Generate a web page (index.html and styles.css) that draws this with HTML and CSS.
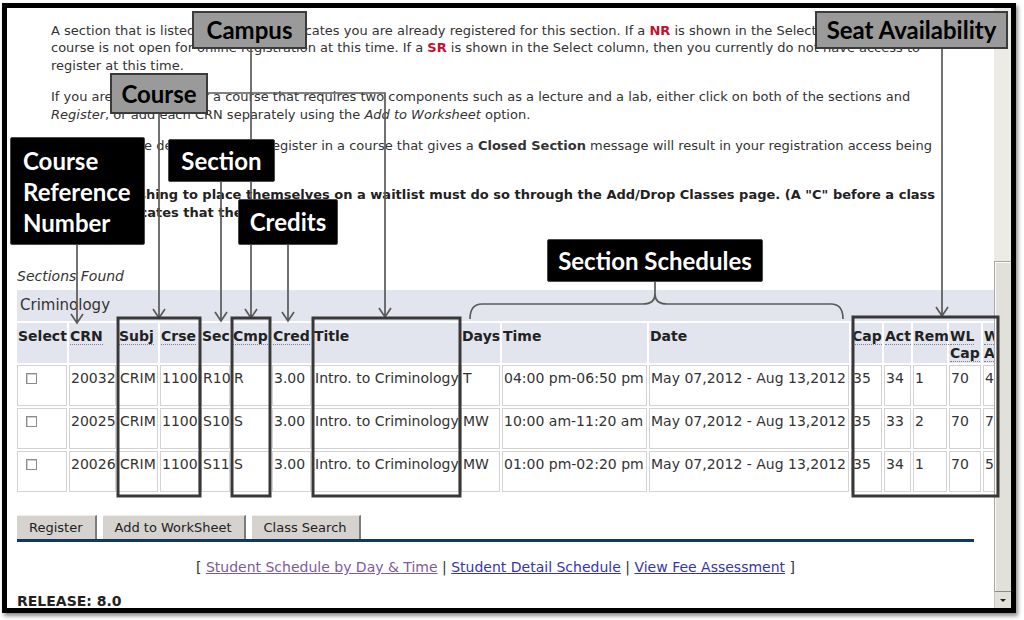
FILE: index.html
```html
<!DOCTYPE html>
<html lang="en">
<head>
<meta charset="utf-8">
<title>Look Up Classes - Sections Found</title>
<link rel="stylesheet" href="styles.css">
</head>
<body>
<div class="stage">
  <div class="shot">
    <div class="page">
      <div class="info">
        <p>A section that is listed in RE status indicates you are already registered for this section. If a <b class="flag">NR</b> is shown in the Select column, then the course is not open for online registration at this time. If a <b class="flag">SR</b> is shown in the Select column, then you currently do not have access to register at this time.</p>
        <p>If you are registering for a course that requires two components such as a lecture and a lab, either click on both of the sections and <i>Register</i>, or add each CRN separately using the <i>Add to Worksheet</i> option.</p>
        <p>Please note the deadlines; try to register in a course that gives a <b>Closed Section</b> message will result in your registration access being restricted.</p>
        <p class="strong">Students wishing to place themselves on a waitlist must do so through the Add/Drop Classes page. (A "C" before a class number indicates that these are full.)</p>
      </div>

      <div class="found">Sections Found</div>

      <table class="sections">
        <caption>Criminology</caption>
        <thead>
          <tr>
            <th class="w-sel">Select</th>
            <th class="w-crn"><span class="abbr">CRN</span></th>
            <th class="w-subj"><span class="abbr">Subj</span></th>
            <th class="w-crse"><span class="abbr">Crse</span></th>
            <th class="w-sec">Sec</th>
            <th class="w-cmp"><span class="abbr">Cmp</span></th>
            <th class="w-cred"><span class="abbr">Cred</span></th>
            <th class="w-title">Title</th>
            <th class="w-days">Days</th>
            <th class="w-time">Time</th>
            <th class="w-date">Date</th>
            <th class="w-cap"><span class="abbr">Cap</span></th>
            <th class="w-act"><span class="abbr">Act</span></th>
            <th class="w-rem"><span class="abbr">Rem</span></th>
            <th class="w-wlcap"><span class="abbr">WL</span><br><span class="abbr">Cap</span></th>
            <th class="w-wlact"><span class="abbr">WL</span><br><span class="abbr">Act</span></th>
          </tr>
        </thead>
        <tbody>
          <tr>
            <td><span class="cb"></span></td>
            <td>20032</td><td>CRIM</td><td>1100</td><td>R10</td><td>R</td><td>3.00</td>
            <td>Intro. to Criminology</td><td>T</td><td>04:00 pm-06:50 pm</td>
            <td>May 07,2012 - Aug 13,2012</td><td>35</td><td>34</td><td>1</td><td>70</td><td>4</td>
          </tr>
          <tr>
            <td><span class="cb"></span></td>
            <td>20025</td><td>CRIM</td><td>1100</td><td>S10</td><td>S</td><td>3.00</td>
            <td>Intro. to Criminology</td><td>MW</td><td>10:00 am-11:20 am</td>
            <td>May 07,2012 - Aug 13,2012</td><td>35</td><td>33</td><td>2</td><td>70</td><td>7</td>
          </tr>
          <tr>
            <td><span class="cb"></span></td>
            <td>20026</td><td>CRIM</td><td>1100</td><td>S11</td><td>S</td><td>3.00</td>
            <td>Intro. to Criminology</td><td>MW</td><td>01:00 pm-02:20 pm</td>
            <td>May 07,2012 - Aug 13,2012</td><td>35</td><td>34</td><td>1</td><td>70</td><td>5</td>
          </tr>
        </tbody>
      </table>

      <div class="actions">
        <button type="button" class="btn">Register</button>
        <button type="button" class="btn">Add to WorkSheet</button>
        <button type="button" class="btn">Class Search</button>
      </div>
      <div class="rule"></div>

      <div class="links">[ <a href="#" class="visited">Student Schedule by Day &amp; Time</a> | <a href="#">Student Detail Schedule</a> | <a href="#">View Fee Assessment</a> ]</div>

      <div class="release">RELEASE: 8.0</div>
    </div>

    <div class="scrollbar">
      <div class="sb-space"></div>
      <div class="sb-thumb"></div>
      <div class="sb-down"><span class="sb-arrow"></span></div>
    </div>
  </div>

  <div class="overlay">
    <svg class="marks" width="1024" height="620" viewBox="0 0 1024 620">
      <g class="leader">
        <path d="M77 245V323M71 314L77 323L83 314"/>
        <path d="M159 114V318M153 309L159 318L165 309"/>
        <path d="M208 93H385V317M379 308L385 317L391 308"/>
        <path d="M251 49V318M245 309L251 318L257 309"/>
        <path d="M221 182V321M215 312L221 321L227 312"/>
        <path d="M288 245V321M282 312L288 321L294 312"/>
        <path d="M942 49V316M936 307L942 316L948 307"/>
        <path d="M655 282V294M470 319Q470 304 482 304H643Q655 304 655 294Q655 304 667 304H831Q843 304 843 319"/>
      </g>
      <g class="hl">
        <rect x="118" y="318" width="82" height="178"/>
        <rect x="232" y="318" width="38" height="178"/>
        <rect x="313" y="318" width="147" height="178"/>
        <rect x="853" y="317" width="145" height="179"/>
      </g>
    </svg>

    <div class="callout gray c-campus">Campus</div>
    <div class="callout gray c-seat">Seat Availability</div>
    <div class="callout gray c-course">Course</div>
    <div class="callout dark c-crn"><span>Course</span><span>Reference</span><span>Number</span></div>
    <div class="callout dark c-section">Section</div>
    <div class="callout dark c-credits">Credits</div>
    <div class="callout dark c-sched">Section Schedules</div>
  </div>
</div>
</body>
</html>
```

FILE: styles.css
```css
* {
  box-sizing: border-box;
}

html,
body {
  margin: 0;
  padding: 0;
  background: #fff;
}

body {
  font-family: "DejaVu Sans", Verdana, sans-serif;
  color: #333;
}

.stage {
  position: relative;
  width: 1024px;
  height: 620px;
  padding: 3px 0 0 2px;
  overflow: hidden;
}

/* framed screenshot */
.shot {
  width: 1014px;
  height: 610px;
  border: 5px solid #000;
  display: flex;
  background: #fff;
  box-shadow: 2px 3px 4px rgba(0, 0, 0, 0.45);
}

.page {
  flex: 1;
  min-width: 0;
  overflow: hidden;
  padding-left: 10px;
}

/* instructions */
.info {
  width: 933px;
  padding: 13.5px 0 0 34px;
}

.info p {
  margin: 0 0 14px;
  font-size: 13px;
  line-height: 17.5px;
}

.info p:last-child {
  margin-bottom: 0;
}

.flag {
  color: #c8102e;
}

.strong {
  font-weight: bold;
  color: #222;
}

.found {
  margin: 47px 0 4.5px;
  font-size: 14px;
  line-height: 17px;
  font-style: italic;
  color: #333;
}

/* sections table */
.sections {
  border-collapse: separate;
  border-spacing: 2px;
  table-layout: fixed;
  width: 1010px;
  margin-left: -2px;
  font-size: 14px;
}

.sections caption {
  caption-side: top;
  text-align: left;
  margin: 0 2px;
  padding: 6px 3px;
  font-size: 15px;
  line-height: 19px;
  background: #e3e5ee;
  color: #333;
}

.sections th {
  height: 40px;
  padding: 5px 1px 1px;
  text-align: left;
  vertical-align: top;
  font-weight: bold;
  line-height: 17px;
  color: #222;
  background: #e3e5ee;
  white-space: nowrap;
}

.abbr {
  border-bottom: 1px dotted #7f7f9a;
}

.sections tbody tr {
  height: 41px;
}

.sections td {
  padding: 4px 1px;
  border: 1px solid #d3d3d3;
  vertical-align: top;
  line-height: 17px;
  color: #333;
  white-space: nowrap;
}

.w-sel { width: 50px; }
.w-crn { width: 47px; }
.w-subj { width: 40px; }
.w-crse { width: 39px; }
.w-sec { width: 29px; }
.w-cmp { width: 38px; }
.w-cred { width: 39px; }
.w-title { width: 146px; }
.w-days { width: 39px; }
.w-time { width: 145px; }
.w-date { width: 200px; }
.w-cap { width: 31px; }
.w-act { width: 27px; }
.w-rem { width: 34px; }
.w-wlcap { width: 32px; }
.w-wlact { width: 40px; }

.cb {
  display: inline-block;
  width: 11px;
  height: 11px;
  margin: 3px 0 0 7px;
  border: 1px solid #8c8c8c;
  background: #fff;
  box-shadow: inset 1px 1px 0 #d0d0d0;
  vertical-align: top;
}

/* buttons + rule */
.actions {
  display: flex;
  gap: 6px;
  margin-top: 21px;
}

.btn {
  height: 24px;
  padding: 0 12px;
  font-family: "DejaVu Sans", Verdana, sans-serif;
  font-size: 13px;
  color: #222;
  background: #d6d3ce;
  border: 0;
  border-top: 1px solid #eeeeea;
  border-right: 2px solid #7c7c7c;
  border-radius: 0;
}

.rule {
  width: 957px;
  height: 3px;
  background: #14375c;
}

.links {
  width: 957px;
  margin-top: 17.5px;
  text-align: center;
  font-size: 14px;
  line-height: 17px;
  color: #333;
}

.links a {
  color: #3535ad;
  text-decoration: underline;
}

.links a.visited {
  color: #7d5b9d;
}

.release {
  margin-top: 17px;
  font-size: 14px;
  line-height: 17px;
  font-weight: bold;
  color: #222;
}

/* scrollbar */
.scrollbar {
  width: 17px;
  display: flex;
  flex-direction: column;
  background: #ecebe6;
}

.sb-space {
  flex: 1;
}

.sb-thumb {
  height: 330px;
  background: #e2e0da;
  border-left: 1px solid #a9a7a1;
  border-top: 1px solid #a9a7a1;
  box-shadow: inset 1px 1px 0 #fbfbf9;
}

.sb-down {
  height: 17px;
  display: flex;
  align-items: center;
  justify-content: center;
  background: #e2e0da;
  border-top: 1px solid #8d8b86;
  border-left: 1px solid #c9c7c1;
}

.sb-arrow {
  width: 0;
  height: 0;
  border-left: 3px solid transparent;
  border-right: 3px solid transparent;
  border-top: 3px solid #222;
}

/* annotation overlay */
.overlay {
  position: absolute;
  inset: 0;
  pointer-events: none;
}

.marks {
  position: absolute;
  left: 0;
  top: 0;
}

.leader path {
  fill: none;
  stroke: #5a5a5a;
  stroke-width: 1.7;
}

.hl rect {
  fill: none;
  stroke: #383838;
  stroke-width: 3;
}

.callout {
  position: absolute;
  display: flex;
  align-items: center;
  justify-content: center;
  font-family: Lato, "Open Sans", sans-serif;
  font-weight: bold;
  font-size: 24px;
  line-height: 1;
  white-space: nowrap;
}

.callout.gray {
  background: #9a9a9a;
  border: 2px solid #3b3b3b;
  color: #000;
}

.callout.dark {
  background: #000;
  border: 1px solid #4a4a4a;
  border-radius: 2px;
  color: #fff;
}

.c-campus { left: 192px; top: 11px; width: 115px; height: 38px; }
.c-seat { left: 815px; top: 11px; width: 193px; height: 38px; }
.c-course { left: 110px; top: 73px; width: 98px; height: 41px; }
.c-section { left: 168px; top: 139px; width: 107px; height: 43px; }
.c-credits { left: 238px; top: 199px; width: 100px; height: 46px; }
.c-sched { left: 547px; top: 239px; width: 216px; height: 43px; }

.c-crn {
  left: 10px;
  top: 137px;
  width: 135px;
  height: 108px;
  flex-direction: column;
  align-items: flex-start;
  justify-content: center;
  padding-left: 12px;
  line-height: 31px;
}
```
